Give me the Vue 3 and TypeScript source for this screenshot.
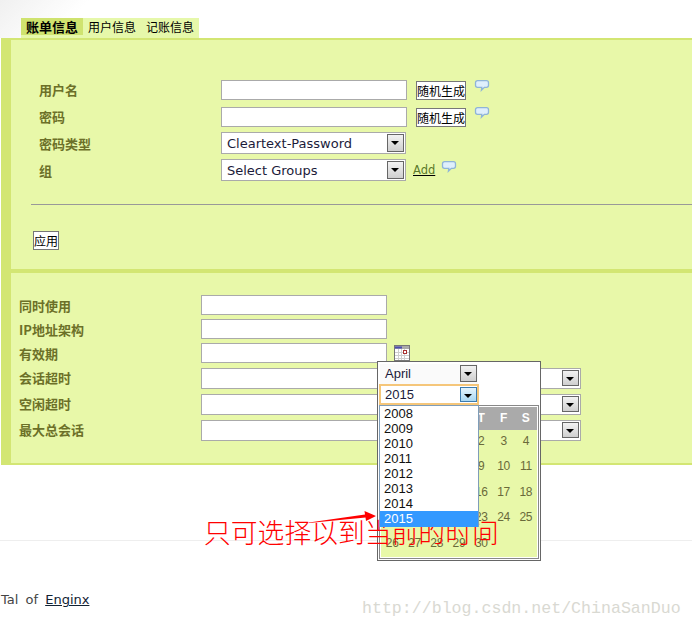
<script setup lang="ts">
const tabs = ['账单信息', '用户信息', '记账信息']
const years = ['2008', '2009', '2010', '2011', '2012', '2013', '2014', '2015']
const weekDays = ['S', 'M', 'T', 'W', 'T', 'F', 'S']
const days: string[] = [
  '', '', '', ...Array.from({ length: 30 }, (_, i) => String(i + 1)),
]
const limits = ['会话超时', '空闲超时', '最大总会话']
</script>

<template>
  <div class="page">
    <div class="corner"></div>
    <div class="tabs">
      <span v-for="(t, i) in tabs" :key="t" class="tab" :class="{ active: i === 0 }">{{ t }}</span>
    </div>

    <div class="panel">
      <section class="top">
        <div class="row">
          <label>用户名</label>
          <input class="field" />
          <button class="btn gen">随机生成</button>
          <svg class="tip" viewBox="0 0 14 12"><path d="M2.5.7h9a2 2 0 0 1 2 2v2.6a2 2 0 0 1-2 2H9.4l-3 3 .4-3H2.5a2 2 0 0 1-2-2V2.700a2 2 0 0 1 2-2z" /></svg>
        </div>
        <div class="row">
          <label>密码</label>
          <input class="field" />
          <button class="btn gen">随机生成</button>
          <svg class="tip" viewBox="0 0 14 12"><path d="M2.5.7h9a2 2 0 0 1 2 2v2.6a2 2 0 0 1-2 2H9.4l-3 3 .4-3H2.5a2 2 0 0 1-2-2V2.700a2 2 0 0 1 2-2z" /></svg>
        </div>
        <div class="row r3">
          <label>密码类型</label>
          <div class="sel"><span>Cleartext-Password</span><i class="drop"></i></div>
        </div>
        <div class="row r4">
          <label>组</label>
          <div class="sel"><span>Select Groups</span><i class="drop"></i></div>
          <a class="add">Add</a>
          <svg class="tip tip-add" viewBox="0 0 14 12"><path d="M2.5.7h9a2 2 0 0 1 2 2v2.6a2 2 0 0 1-2 2H9.4l-3 3 .4-3H2.5a2 2 0 0 1-2-2V2.700a2 2 0 0 1 2-2z" /></svg>
        </div>
        <hr class="rule" />
        <button class="btn apply">应用</button>
      </section>

      <section class="bottom">
        <div class="line"><label>同时使用</label><input class="field" /></div>
        <div class="line"><label>IP地址架构</label><input class="field" /></div>
        <div class="line">
          <label>有效期</label><input class="field" />
          <svg class="cal-icon" viewBox="0 0 16 16">
            <rect x="0.5" y="0.5" width="15" height="15" fill="#fff" stroke="#777" />
            <rect x="1" y="1" width="14" height="3" fill="#aaa" />
            <rect x="1" y="1.500" width="7" height="2" fill="#4c4cb0" />
            <path d="M1 7.500h14M1 10.500h14M1 13.500h14M4.500 4v11M7.500 4v11M10.500 4v11" stroke="#cfcfcf" fill="none" />
            <rect x="9.500" y="5.500" width="3" height="3" fill="#fff" stroke="#a33" />
          </svg>
        </div>
        <div v-for="(l, i) in limits" :key="l" class="line" :class="'lim' + i">
          <label>{{ l }}</label>
          <div class="sel wide"><span></span><i class="drop"></i></div>
        </div>
      </section>
    </div>

    <div class="foot-rule"></div>
    <footer class="foot">Tal of <a>Enginx</a></footer>

    <div class="popup">
      <div class="popup-in">
        <div class="sel month"><span>April</span><i class="drop"></i></div>
        <div class="sel year"><span>2015</span><i class="drop hot"></i></div>
        <div class="calendar">
          <div class="cal-head"><b v-for="(d, i) in weekDays" :key="i">{{ d }}</b></div>
          <div class="cal-body"><span v-for="(d, i) in days" :key="i">{{ d }}</span></div>
        </div>
        <ul class="years">
          <li v-for="y in years" :key="y" :class="{ on: y === '2015' }">{{ y }}</li>
        </ul>
      </div>
    </div>

    <svg class="arrow" viewBox="0 0 70 16">
      <path d="M1 14.500 L57 6.500 L56.500 3 L68 8 L58 13 L57.500 9.500 L1 15 Z" fill="#f00" />
    </svg>
    <div class="note">只可选择以到当前的时间</div>
    <div class="mark">http://blog.csdn.net/ChinaSanDuo</div>
  </div>
</template>

<style>
html, body { margin: 0; background: #fff; }
</style>

<style scoped>
.page {
  position: relative;
  width: 692px;
  height: 628px;
  overflow: hidden;
  padding-top: 18px;
  box-sizing: border-box;
  font-family: "DejaVu Sans", "Noto Sans CJK SC", sans-serif;
  font-size: 13px;
  color: #1b1b3a;
}
.corner {
  position: absolute;
  left: 0;
  top: 0;
  width: 90px;
  height: 38px;
  background: linear-gradient(135deg, #f0f0f0 0%, #fff 70%);
}
.tabs {
  position: relative;
  display: flex;
  width: 178px;
  height: 20px;
  margin-left: 21px;
  background: #e6f8aa;
  font-family: "Noto Sans CJK SC", sans-serif;
  font-size: 12px;
  color: #000;
  white-space: nowrap;
}
.tab { padding: 0 5px; height: 17px; line-height: 17px; }
.tab.active { background: #cfe36f; font-size: 13px; font-weight: 700; }
.panel {
  margin-left: 1px;
  height: 427px;
  background: #e8f8a9;
  border-top: 2px solid #d3e673;
  border-bottom: 2px solid #d3e673;
  border-left: 10px solid #d3e673;
  box-sizing: border-box;
}
label {
  font-family: "Noto Sans CJK SC", sans-serif;
  font-weight: 700;
  font-size: 13px;
  color: #6c7028;
}
.top {
  height: 233px;
  padding-top: 36px;
  box-sizing: border-box;
  border-bottom: 4px solid #d3e673;
}
.row { display: flex; align-items: center; height: 27px; padding-left: 28px; }
.row label { width: 182px; flex: none; }
.r3 { height: 26px; }
.r4 { height: 26px; margin-top: 1px; }
.field {
  display: block;
  width: 186px;
  height: 20px;
  padding: 0;
  box-sizing: border-box;
  border: 1px solid #aaa;
  background: #fff;
  flex: none;
}
.btn {
  padding: 0;
  border: 1px solid #777;
  background: #fff;
  color: #000;
  font-family: "Noto Sans CJK SC", sans-serif;
  font-size: 12px;
  line-height: 17px;
  box-sizing: border-box;
}
.gen { width: 50px; height: 19px; margin: 2px 0 0 9px; flex: none; }
.tip {
  width: 14px;
  height: 12px;
  margin: -7px 0 0 9px;
  fill: #dfeffc;
  stroke: #8fb4d8;
  stroke-width: 1.300;
  flex: none;
  overflow: visible;
}
.tip-add { margin: -6px 0 0 7px; }
.sel {
  position: relative;
  width: 185px;
  height: 22px;
  box-sizing: border-box;
  border: 1px solid #aaa;
  background: #fff;
  padding-left: 5px;
  line-height: 22px;
  flex: none;
}
.drop {
  position: absolute;
  right: 1px;
  top: 1px;
  width: 17px;
  height: 18px;
  box-sizing: border-box;
  border: 1px solid #666;
  background: linear-gradient(#f2f2f2, #cfcfcf);
}
.drop::after {
  content: "";
  position: absolute;
  left: 3px;
  top: 6px;
  border: 4px solid transparent;
  border-top: 4px solid #000;
  border-bottom: 0;
}
.drop.hot { border-color: #3d7bad; background: linear-gradient(#e6f4fc, #a9d8f3); }
.add {
  margin-left: 7px;
  font-size: 11.500px;
  color: #5b7a2a;
  text-decoration: underline;
  text-decoration-color: #000;
}
.rule {
  height: 0;
  margin: 21px 0 0 20px;
  border: 0;
  border-top: 1px solid #999;
}
.apply {
  display: block;
  width: 26px;
  height: 19px;
  margin: 26px 0 0 22px;
}
.bottom { padding-top: 20px; }
.line { display: flex; align-items: center; height: 24px; padding-left: 8px; }
.line label { width: 182px; flex: none; position: relative; }
.lim0 label, .lim1 label, .lim2 label { top: -1px; }
.sel.wide { width: 380px; height: 21px; }
.sel.wide .drop { height: 16px; top: 1px; }
.lim0 { margin-top: 1px; }
.lim1, .lim2 { margin-top: 2px; }
.cal-icon { width: 16px; height: 16px; margin-left: 7px; }
.foot-rule { height: 1px; margin-top: 75px; background: #eee; }
.foot {
  margin-top: 51px;
  font-size: 13px;
  line-height: 16px;
  word-spacing: 3px;
  padding-left: 1px;
  color: #444;
}
.foot a { color: #123; text-decoration: underline; }
.popup {
  position: absolute;
  left: 377px;
  top: 361px;
  width: 164px;
  height: 200px;
  box-sizing: border-box;
  border: 1px solid #666;
  background: #fff;
  font-family: "Liberation Sans", sans-serif;
}
.popup-in { position: relative; height: 100%; }
.sel.month {
  position: absolute;
  left: 2px;
  top: 2px;
  width: 98px;
  height: 20px;
  border: 0;
  background: #fafafa;
  line-height: 20px;
  font-size: 13px;
}
.sel.month .drop { height: 17px; }
.sel.year {
  position: absolute;
  left: 1px;
  top: 22px;
  width: 100px;
  height: 21px;
  border: 2px solid #f5c67a;
  padding-left: 4px;
  line-height: 17px;
  font-size: 13px;
}
.sel.year .drop { right: 0; top: 1px; height: 15px; }
.calendar {
  position: absolute;
  left: 1px;
  top: 43px;
  width: 160px;
  height: 154px;
  padding: 1px;
  box-sizing: border-box;
  border: 1px solid #888;
  background: #e8f8a9;
  background-clip: content-box;
  font-size: 12px;
  color: #6a6a3a;
}
.cal-head {
  display: grid;
  grid-template-columns: repeat(7, 1fr);
  height: 23px;
  background: #aaa;
  color: #fff;
  line-height: 23px;
  text-align: center;
}
.cal-body {
  display: grid;
  grid-template-columns: repeat(7, 1fr);
  grid-auto-rows: 25.500px;
  margin-top: -1.500px;
  line-height: 25.500px;
  text-align: center;
  letter-spacing: -0.300px;
}
.years {
  position: absolute;
  left: 1px;
  top: 43px;
  width: 100px;
  height: 122px;
  margin: 0;
  padding: 0;
  box-sizing: border-box;
  border: 1px solid #7f9db9;
  background: #fff;
  list-style: none;
  font-size: 13px;
  color: #111;
  z-index: 1;
}
.years li { height: 15px; line-height: 15px; padding-left: 4px; }
.years li.on { height: 16px; background: #3399ff; color: #fff; }
.arrow {
  position: absolute;
  left: 308px;
  top: 508px;
  width: 70px;
  height: 16px;
  overflow: visible;
}
.note {
  position: absolute;
  left: 204px;
  top: 514px;
  font-family: "Noto Sans CJK SC", sans-serif;
  font-size: 26.800px;
  line-height: 36px;
  font-weight: 300;
  color: #f00;
  white-space: nowrap;
}
.mark {
  position: absolute;
  left: 362px;
  top: 599px;
  font-family: "Liberation Mono", monospace;
  font-size: 16.600px;
  line-height: 20px;
  color: #d9d9d2;
  white-space: nowrap;
}
</style>
